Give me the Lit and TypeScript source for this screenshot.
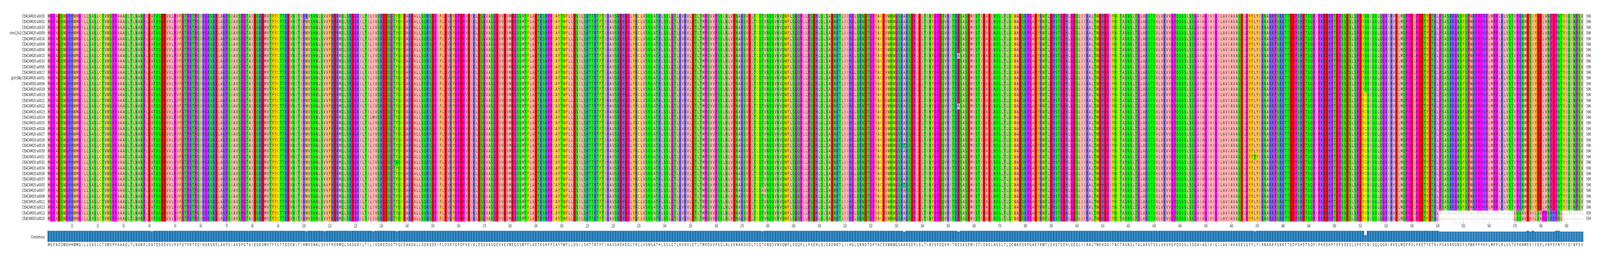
import { LitElement, html, css } from "lit";
import { customElement } from "lit/decorators.js";

const SEQ =
  "MGPADSWGHHWMGILLSASLCTVWSPPAAAQLTLNANPLDATQSEDVVLPVFGTPRTPQIHGRSRELAKPSIAVSPGTAIEQKDM" +
  "VTFYCTTKDVNITIHWVSNNLSVVFHERMQLSKDGKILTILIVQREDSGTYQCEARDALLSQRSDPIFLDVKYGPDPVEIKLESG" +
  "VASGEVVEVMEGSSMTFLAETKSHPPCAYTWFLLDSILSHTTRTFTIHAVSREHEGLYRCLVSNSATHLSSLGTLKVRVLETLTM" +
  "PQVVPSSLNLVENARSVDLTCQTVNQSVNVQWFLSGQPLLPSEHLQLSADNRTLIIHGLQRNDTGPYACEVWNWGSRARSEPLEL" +
  "TINYGPDQVHITRESASEMISTIEAELNSSLTLQCWAESKPGAEYRWTLEHSTGEHLGEQLIIRALTWEHDGIYNCTASNSLTGLA" +
  "RSTSVLVKVVGPQSSSLSSGAIAGIVIGILAVIAVASELGYFLYIRNARRPSRKTTEDPSHETSQPIPKEEHPTEPSSESLSPEY" +
  "CNISQLQGRIRVELMQPPDLPEETYETKLPSASRRGNSFSPWKPPPKPLMPPLRLVSTVPKNMESIYEELVNPEPNTYIQINPSV";

const SHORT_TAIL = "-".repeat(29) + "LQQAVEAILSAPGSHHPNL" + "-".repeat(8);

const LABELS = [
  "CEACAM20:a0035", "CEACAM20:a0002", "CEACAM20:a0033", "chm13v2:CEACAM20:a0009",
  "CEACAM20:a0016", "CEACAM20:a0009", "CEACAM20:a0004", "CEACAM20:a0015",
  "CEACAM20:a0010", "CEACAM20:a0005", "CEACAM20:a0017", "grch38p:CEACAM20:a0001",
  "CEACAM20:a0006", "CEACAM20:a0018", "CEACAM20:a0019", "CEACAM20:a0021",
  "CEACAM20:a0022", "CEACAM20:a0023", "CEACAM20:a0024", "CEACAM20:a0025",
  "CEACAM20:a0026", "CEACAM20:a0027", "CEACAM20:a0028", "CEACAM20:a0029",
  "CEACAM20:a0030", "CEACAM20:a0031", "CEACAM20:a0032", "CEACAM20:a0034",
  "CEACAM20:a0036", "CEACAM20:a0037", "CEACAM20:a0003", "CEACAM20:a0007",
  "CEACAM20:a0008", "CEACAM20:a0011", "CEACAM20:a0013", "CEACAM20:a0012",
  "CEACAM20:a0020",
];

/* [row index, column number, residue] point differences from the consensus */
const VARIANTS: [number, number, string][] = [
  [0, 101, "R"],
  [26, 136, "N"],
  [31, 278, "A"],
  [23, 333, "T"],
  [30, 333, "T"],
  [7, 354, "A"],
  [16, 354, "A"],
  [10, 368, "N"],
  [32, 368, "N"],
  [33, 368, "N"],
  [34, 368, "N"],
  [25, 469, "T"],
  [22, 41, "V"],
  [30, 108, "A"],
  [18, 127, "M"],
];

function buildRows(): string[] {
  return LABELS.map((_, r) => {
    const chars = SEQ.split("");
    for (const [row, col, res] of VARIANTS) if (row === r) chars[col - 1] = res;
    if (r < 14) chars[511] = "S";
    let s = chars.join("");
    if (r >= 35) s = s.slice(0, 540) + SHORT_TAIL;
    return s;
  });
}

const GROUP: Record<string, string> = {
  A: "ali", I: "ali", L: "ali", M: "ali", V: "ali",
  F: "aro", W: "aro", Y: "aro",
  K: "pos", R: "pos", H: "pos",
  D: "neg", E: "neg",
  S: "phi", T: "phi", N: "phi", Q: "phi",
  P: "con", G: "con",
  C: "cys",
  "-": "gap",
};

const FRAME_WIDTH = 6258;

@customElement("app-root")
export class AppRoot extends LitElement {
  static styles = css`
    :host {
      display: block;
      height: 668px;
      background: #fff;
      font-family: "DejaVu Sans", sans-serif;
      color: #262626;
      overflow: hidden;
    }
    .figure {
      width: 6258px;
      display: flex;
      flex-direction: column;
      padding-top: 35px;
      transform-origin: 0 0;
    }
    .row {
      display: flex;
      height: 14.397px;
      line-height: 14.397px;
    }
    .label {
      flex: none;
      width: 175px;
      margin-right: 11px;
      text-align: right;
      font-size: 9.8px;
      white-space: nowrap;
    }
    .track {
      flex: none;
      width: 6008px;
      display: flex;
    }
    .cell {
      flex: none;
      width: 10.08px;
      text-align: center;
      font-size: 10px;
    }
    .count {
      margin-left: 10px;
      font-size: 9.8px;
    }
    .ali { background: #ffafaf; }
    .aro { background: #ffc800; }
    .pos { background: #6464ff; }
    .neg { background: #ff0000; }
    .phi { background: #00ff00; }
    .con { background: #ff00ff; }
    .cys { background: #ffff00; }
    .gap { background: #fff; }
    .ruler {
      display: flex;
      height: 23px;
      padding-left: 186px;
    }
    .tick-cell {
      flex: none;
      width: 10.08px;
      display: flex;
      flex-direction: column;
      align-items: center;
      padding-top: 1px;
    }
    .tick {
      flex: none;
      width: 1px;
      height: 4px;
      background: #333;
    }
    .tick-num {
      flex: none;
      margin-top: 2px;
      font-size: 10px;
      line-height: 10px;
      transform: scaleX(0.72);
      white-space: nowrap;
    }
    .consensus {
      display: flex;
      height: 28.7px;
    }
    .consensus .label {
      line-height: 34px;
      font-size: 9.9px;
    }
    .bars {
      flex: none;
      width: 6008px;
      display: flex;
      align-items: flex-end;
      height: 28.7px;
      border-left: 1px solid #bcd6e9;
      margin-left: -1px;
    }
    .bar {
      flex: none;
      width: 10.08px;
      box-sizing: border-box;
      background: #1f77b4;
      border-top: 1px solid #bcd6e9;
      border-right: 1px solid #bcd6e9;
    }
    .bar.partial {
      background: #2a7cb8;
    }
    .letters {
      display: flex;
      padding-left: 186px;
      height: 14px;
      line-height: 14px;
      margin-top: 1px;
    }
  `;

  private rows = buildRows();

  render() {
    const n = SEQ.length;
    const fit = Math.min(1, window.innerWidth / FRAME_WIDTH);
    const cols = Array.from({ length: n }, (_, i) => i);
    const conservation = cols.map((c) => {
      const freq: Record<string, number> = {};
      for (const r of this.rows) {
        const ch = r[c];
        if (ch !== "-") freq[ch] = (freq[ch] || 0) + 1;
      }
      return Math.max(...Object.values(freq)) / this.rows.length;
    });
    return html`
      <div class="figure" style="transform:scaleX(${fit})">
        ${this.rows.map(
          (seq, r) => html`
            <div class="row">
              <div class="label">${LABELS[r]}</div>
              <div class="track">
                ${seq.split("").map((ch) => html`<span class="cell ${GROUP[ch]}">${ch}</span>`)}
              </div>
              <div class="count">${r >= 35 ? 559 : 596}</div>
            </div>
          `
        )}
        <div class="ruler">
          ${cols.map((c) =>
            (c + 1) % 10 === 0
              ? html`<div class="tick-cell"><div class="tick"></div><div class="tick-num">${c + 1}</div></div>`
              : html`<div class="tick-cell"></div>`
          )}
        </div>
        <div class="consensus">
          <div class="label">Consensus</div>
          <div class="bars">
            ${conservation.map(
              (f) =>
                html`<div class="bar ${f < 1 ? "partial" : ""}" style="height:${(f * 100).toFixed(2)}%"></div>`
            )}
          </div>
        </div>
        <div class="letters">
          ${SEQ.split("").map((ch) => html`<span class="cell">${ch}</span>`)}
        </div>
      </div>
    `;
  }
}
